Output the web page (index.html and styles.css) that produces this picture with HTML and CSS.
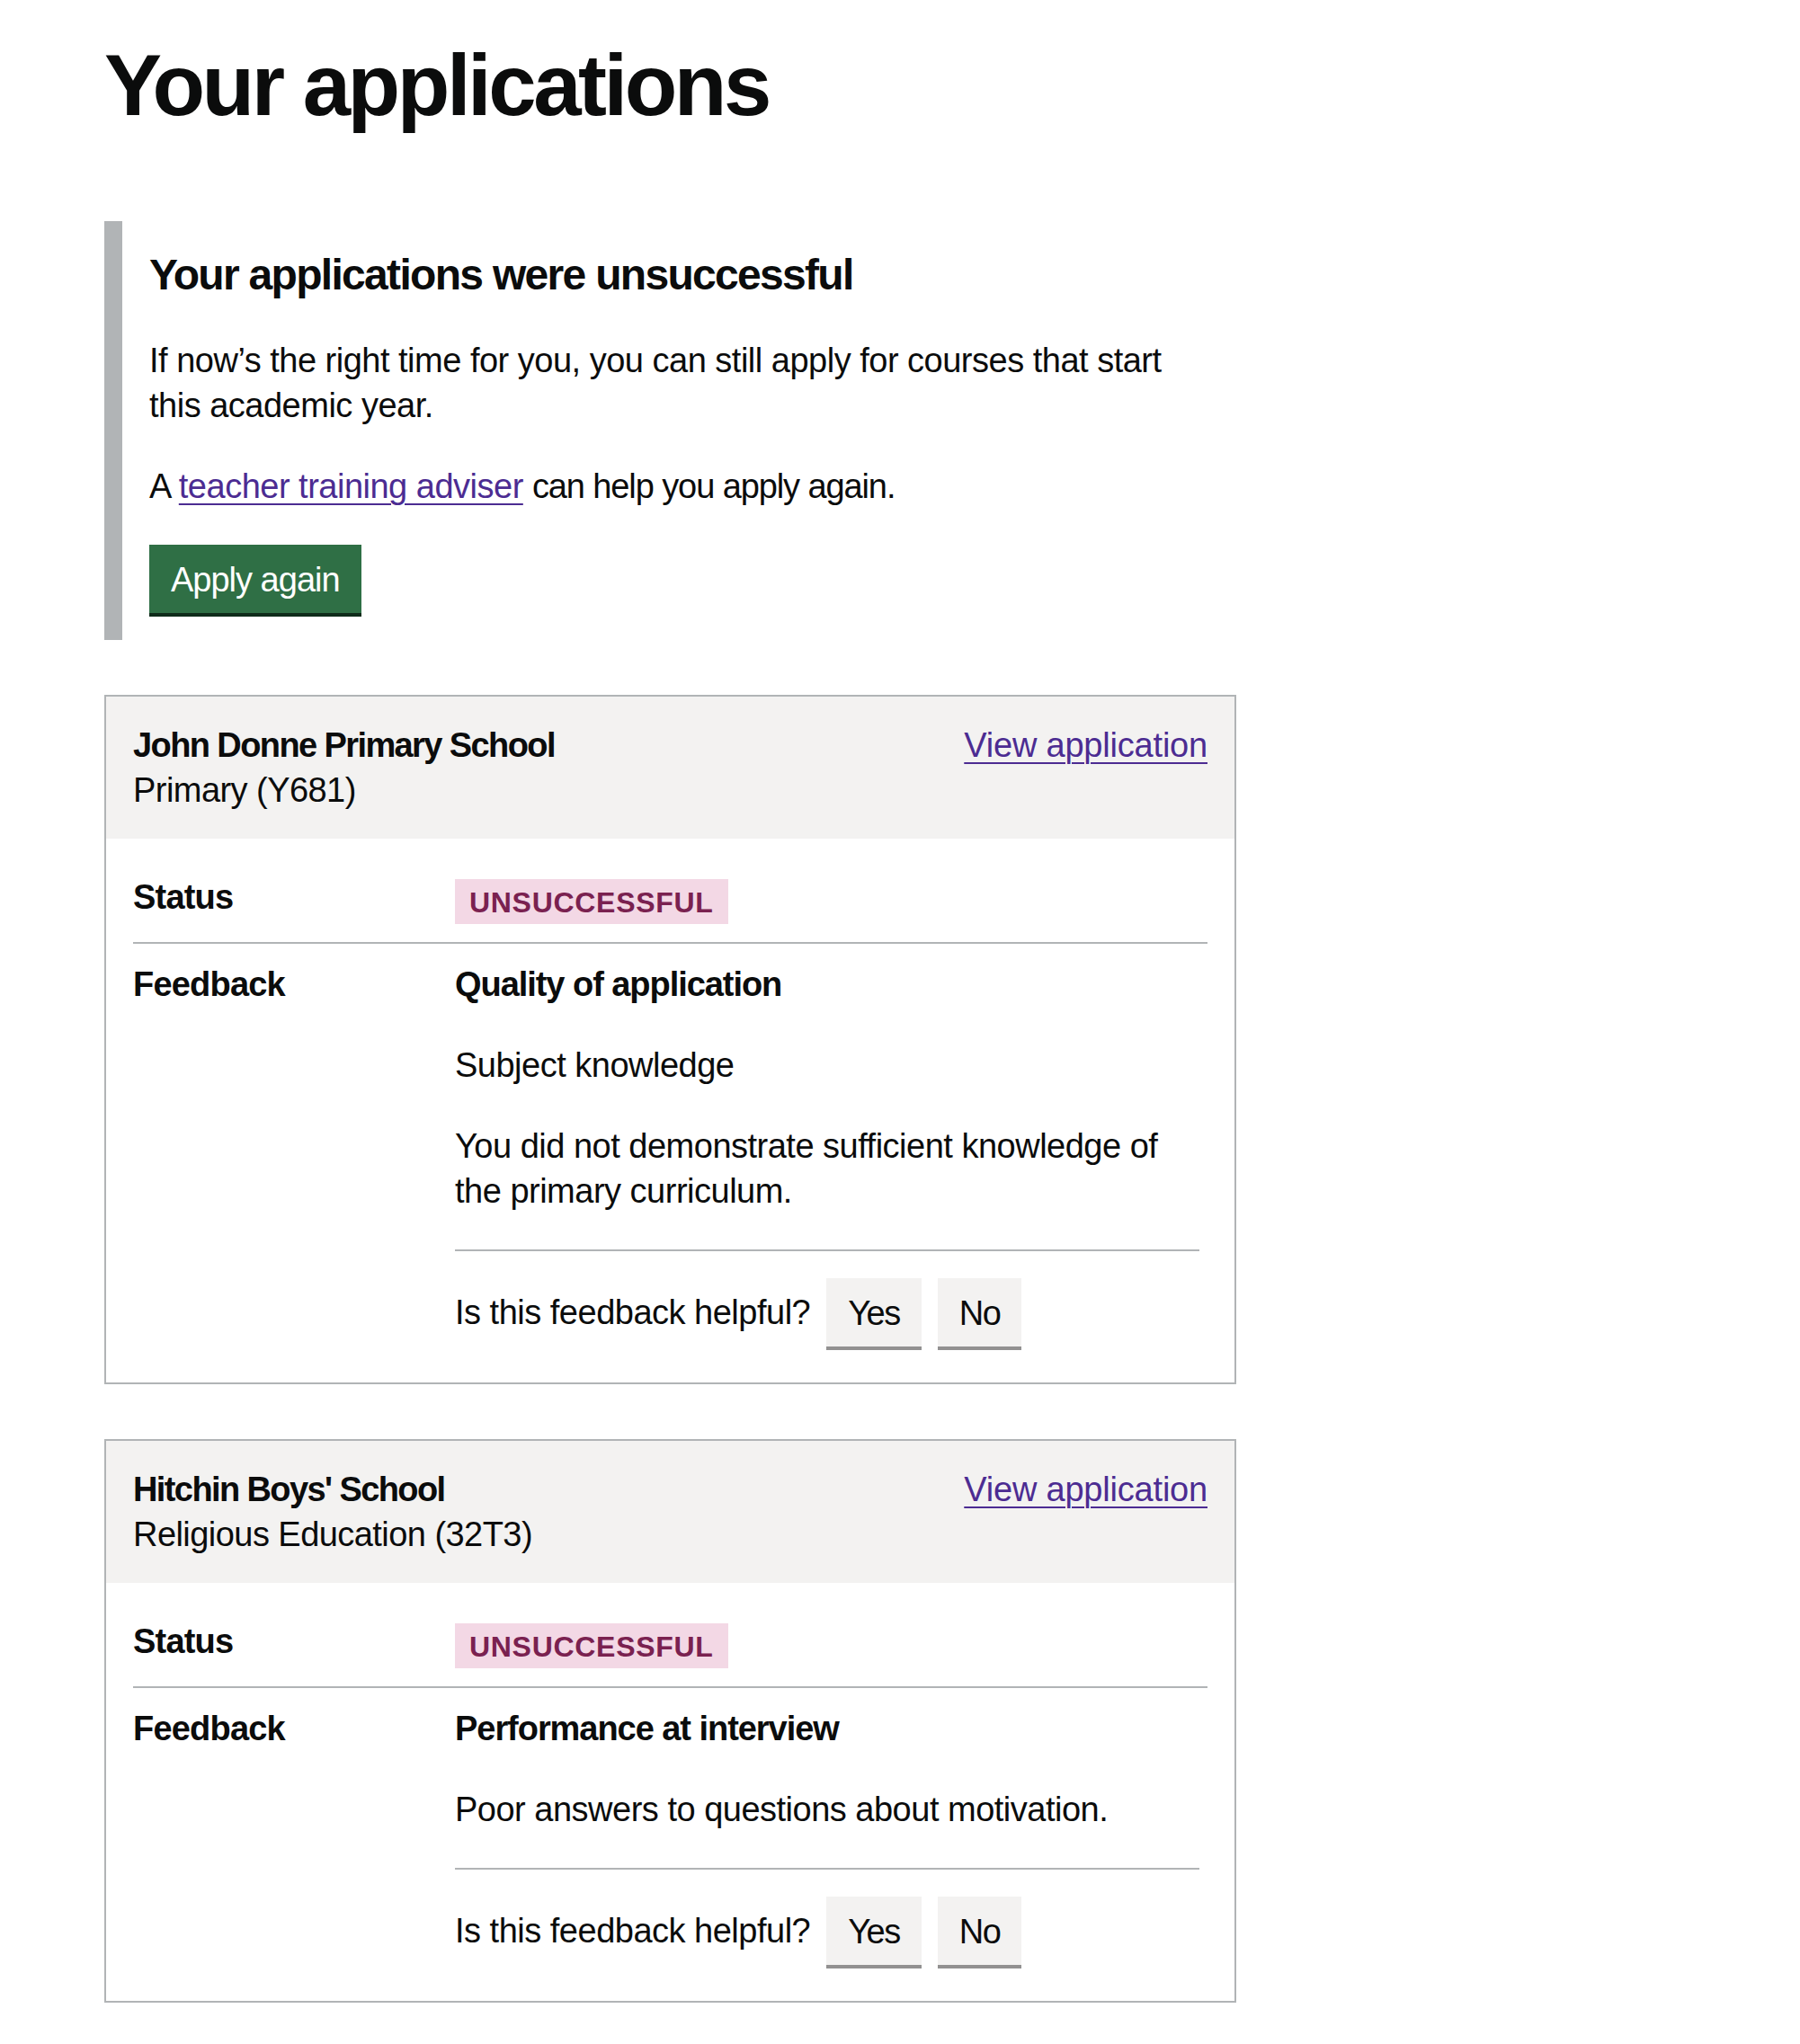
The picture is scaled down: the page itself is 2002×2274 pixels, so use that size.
FILE: index.html
```html
<!DOCTYPE html>
<html lang="en">
<head>
<meta charset="utf-8">
<title>Your applications</title>
<link rel="stylesheet" href="styles.css">
</head>
<body>
<main class="page">
  <h1 class="heading-xl">Your applications</h1>

  <div class="inset">
    <h2 class="heading-m">Your applications were unsuccessful</h2>
    <p class="body">If now’s the right time for you, you can still apply for courses that start this academic year.</p>
    <p class="body">A <a class="link" href="#">teacher training adviser</a> <span class="tight">can help you apply again.</span></p>
    <a class="button" href="#">Apply again</a>
  </div>

  <section class="card">
    <div class="card-header">
      <div class="card-heading">
        <div class="card-title">John Donne Primary School</div>
        <div class="card-sub">Primary (Y681)</div>
      </div>
      <a class="link card-link" href="#">View application</a>
    </div>
    <dl class="summary">
      <div class="row">
        <dt class="key">Status</dt>
        <dd class="value"><strong class="tag">Unsuccessful</strong></dd>
      </div>
      <div class="row">
        <dt class="key">Feedback</dt>
        <dd class="value">
          <p class="bold-line">Quality of application</p>
          <p class="body">Subject knowledge</p>
          <p class="body">You did not demonstrate sufficient knowledge of the primary curriculum.</p>
          <hr class="rule">
          <div class="helpful">
            <span class="helpful-label">Is this feedback helpful?</span>
            <button class="button-secondary" type="button">Yes</button>
            <button class="button-secondary" type="button">No</button>
          </div>
        </dd>
      </div>
    </dl>
  </section>

  <section class="card">
    <div class="card-header">
      <div class="card-heading">
        <div class="card-title">Hitchin Boys' School</div>
        <div class="card-sub">Religious Education (32T3)</div>
      </div>
      <a class="link card-link" href="#">View application</a>
    </div>
    <dl class="summary">
      <div class="row">
        <dt class="key">Status</dt>
        <dd class="value"><strong class="tag">Unsuccessful</strong></dd>
      </div>
      <div class="row">
        <dt class="key">Feedback</dt>
        <dd class="value">
          <p class="bold-line">Performance at interview</p>
          <p class="body">Poor answers to questions about motivation.</p>
          <hr class="rule">
          <div class="helpful">
            <span class="helpful-label">Is this feedback helpful?</span>
            <button class="button-secondary" type="button">Yes</button>
            <button class="button-secondary" type="button">No</button>
          </div>
        </dd>
      </div>
    </dl>
  </section>
</main>
</body>
</html>
```

FILE: styles.css
```css
* {
  box-sizing: border-box;
}

html, body {
  margin: 0;
  padding: 0;
  background: #ffffff;
}

body {
  font-family: "Liberation Sans", Arial, sans-serif;
  color: #0b0c0c;
  font-size: 38px;
  line-height: 50px;
  letter-spacing: -0.5px;
}

.page {
  width: 1375px;
  padding: 45px 0 0 116px;
}

.heading-xl {
  margin: 0 0 101px;
  font-size: 96px;
  line-height: 100px;
  font-weight: 700;
  letter-spacing: -3.5px;
}

.inset {
  border-left: 20px solid #b1b4b6;
  padding: 30px;
  margin: 0 0 61px;
}

.heading-m {
  margin: 0 0 40px;
  font-size: 48px;
  line-height: 60px;
  font-weight: 700;
  letter-spacing: -1.7px;
}

.body {
  margin: 0 0 40px;
}

.tight {
  letter-spacing: -1.1px;
}

.link {
  color: #4c2c92;
  text-decoration: underline;
  text-decoration-thickness: 2px;
  text-underline-offset: 6px;
}

.card-link {
  letter-spacing: -0.2px;
}

.button {
  display: inline-block;
  font-family: inherit;
  font-size: 38px;
  line-height: 38px;
  padding: 16px 20px 14px;
  border: 4px solid transparent;
  background: #2f6f45;
  color: #ffffff;
  text-decoration: none;
  box-shadow: 0 4px 0 #0f2b1a;
  letter-spacing: -1px;
}

.card {
  border: 2px solid #b1b4b6;
  margin: 0 0 61px;
}

.card-header {
  background: #f3f2f1;
  padding: 29px 30px 29px;
  display: flex;
  justify-content: space-between;
  align-items: flex-start;
}

.card-title {
  font-weight: 700;
  letter-spacing: -1.6px;
}

.card-sub {
  letter-spacing: -0.55px;
}

.summary {
  margin: 0;
  padding: 20px 30px;
}

.row {
  display: grid;
  grid-template-columns: 358px 1fr;
  padding: 20px 0;
  border-bottom: 2px solid #b1b4b6;
}

.row:last-child {
  border-bottom: 0;
}

.key {
  font-weight: 700;
  letter-spacing: -0.8px;
}

.value {
  margin: 0;
  padding-right: 9px;
}

.tag {
  display: inline-block;
  vertical-align: top;
  margin-top: 5px;
  padding: 10px 16px 8px;
  font-size: 32px;
  line-height: 32px;
  font-weight: 700;
  text-transform: uppercase;
  letter-spacing: 0.7px;
  background: #f3d8e5;
  color: #7a2150;
}

.bold-line {
  margin: 0 0 40px;
  font-weight: 700;
  letter-spacing: -1.05px;
}

.rule {
  margin: 38px 0 30px;
  border: 0;
  height: 2px;
  background: #b1b4b6;
}

.helpful {
  display: flex;
  align-items: center;
}

.helpful-label {
  margin-right: 18px;
}

.button-secondary {
  font-family: inherit;
  font-size: 38px;
  line-height: 38px;
  letter-spacing: -1.5px;
  color: #0b0c0c;
  background: #f3f2f1;
  border: 4px solid transparent;
  border-radius: 0;
  padding: 16px 20px 14px;
  margin: 0 18px 0 0;
  box-shadow: 0 4px 0 #929191;
}
```
